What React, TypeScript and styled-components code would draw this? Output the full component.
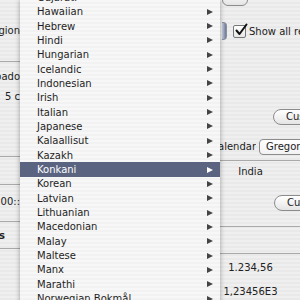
import React from "react";
import styled, { createGlobalStyle } from "styled-components";

const GlobalStyle = createGlobalStyle`
  html, body {
    margin: 0;
    padding: 0;
    overflow: hidden;
    background: #ececec;
  }
  body {
    font-family: "DejaVu Sans", "Liberation Sans", sans-serif;
    font-size: 10px;
    color: #222;
  }
`;

const pinstripe = (a: string, b: string) => `
  repeating-linear-gradient(
    to bottom,
    ${a} 0,
    ${a} 2px,
    ${b} 2px,
    ${b} 4px
  )
`;

const Screen = styled.div`
  width: 300px;
  height: 300px;
  overflow: hidden;
  display: grid;
  grid-template-columns: 20px 200px 80px;
  background: ${pinstripe("#efefef", "#e9e9e9")};
`;

/* ---------- window content left of the menu ---------- */

const LeftPane = styled.div`
  display: flex;
  flex-direction: column;
  overflow: hidden;
`;

// flex-end so that a long label spills off the left edge
const LeftLabel = styled.div<{ $top: number; $bold?: boolean; $inset?: number }>`
  margin-top: ${(p) => p.$top}px;
  height: 14px;
  line-height: 14px;
  display: flex;
  justify-content: flex-end;
  padding-right: ${(p) => p.$inset ?? 0}px;
  white-space: nowrap;
  font-weight: ${(p) => (p.$bold ? 700 : 400)};
  flex-shrink: 0;
`;

const LeftRule = styled.div<{ $top: number }>`
  margin-top: ${(p) => p.$top}px;
  height: 1px;
  background: #a9a9a9;
  flex-shrink: 0;
`;

/* ---------- the menu ---------- */

const Menu = styled.div`
  position: relative;
  z-index: 1;
  background: ${pinstripe("#f7f7f7", "#f2f2f2")};
  box-shadow: 0 0 5px rgba(0, 0, 0, 0.35);
  display: flex;
  flex-direction: column;
`;

const MenuList = styled.div`
  margin-top: -9.8px;
  display: flex;
  flex-direction: column;
`;

const MenuItem = styled.div<{ $active?: boolean }>`
  height: 14.35px;
  flex-shrink: 0;
  display: flex;
  align-items: center;
  justify-content: space-between;
  padding: 0 7px 0 17px;
  white-space: nowrap;
  color: ${(p) => (p.$active ? "#fff" : "#1e1e1e")};
  background: ${(p) => (p.$active ? "#5a6380" : "transparent")};
`;

const Arrow = styled.span<{ $active?: boolean }>`
  width: 0;
  height: 0;
  border-top: 3.5px solid transparent;
  border-bottom: 3.5px solid transparent;
  border-left: 6px solid ${(p) => (p.$active ? "#fff" : "#444")};
`;

/* ---------- window content right of the menu ---------- */

const RightPane = styled.div`
  display: flex;
  flex-direction: column;
  align-items: flex-start;
  overflow: hidden;
`;

const PushButton = styled.div<{ $top: number; $left: number }>`
  margin-top: ${(p) => p.$top}px;
  margin-left: ${(p) => p.$left}px;
  height: 14px;
  padding: 0 12px;
  border: 1px solid #8c8c8c;
  border-radius: 8px;
  background: linear-gradient(to bottom, #ffffff, #f0f0f0 60%, #e4e4e4);
  line-height: 14px;
  white-space: nowrap;
  flex-shrink: 0;
`;

const TopButton = styled(PushButton)`
  width: 0;
  padding: 0 12px;
  border-radius: 0 0 6px 6px;
`;

const CheckRow = styled.div`
  margin-top: 17px;
  height: 16px;
  display: flex;
  align-items: center;
  white-space: nowrap;
`;

const PopupEnd = styled.div`
  margin-left: 2px;
  width: 4px;
  height: 16px;
  border-radius: 0 4px 4px 0;
  border: 1px solid #8a8f9a;
  border-left: none;
  background: linear-gradient(to right, #c9d2e2, #8f9bb4 60%, #6d7a94);
`;

const CheckBox = styled.div`
  margin-left: 6px;
  width: 11px;
  height: 11px;
  border: 1px solid #777;
  border-radius: 2px;
  background: linear-gradient(to bottom, #fff, #e6e6e6);
  position: relative;
  flex-shrink: 0;

  svg {
    position: absolute;
    left: 0;
    top: -3px;
  }
`;

const CheckLabel = styled.span`
  margin-left: 3px;
  font-size: 10px;
`;

const CalendarRow = styled.div`
  margin-top: 13.5px;
  height: 16px;
  display: flex;
  align-items: center;
  white-space: nowrap;
`;

const CalendarLabel = styled.div`
  width: 36px;
  overflow: hidden;
  display: flex;
  justify-content: flex-end;
`;

const Popup = styled.div`
  margin-left: 3px;
  height: 14px;
  padding: 0 20px 0 6px;
  border: 1px solid #8c8c8c;
  border-radius: 4px;
  background: linear-gradient(to bottom, #ffffff, #f2f2f2);
  line-height: 14px;
`;

const Rule = styled.div<{ $top: number }>`
  margin-top: ${(p) => p.$top}px;
  width: 100%;
  height: 1px;
  background: #a9a9a9;
  flex-shrink: 0;
`;

const CenterText = styled.div<{ $top: number }>`
  margin-top: ${(p) => p.$top}px;
  width: 61px;
  height: 14px;
  line-height: 14px;
  text-align: center;
  white-space: nowrap;
`;

const languages = [
  "Gujarati",
  "Hawaiian",
  "Hebrew",
  "Hindi",
  "Hungarian",
  "Icelandic",
  "Indonesian",
  "Irish",
  "Italian",
  "Japanese",
  "Kalaallisut",
  "Kazakh",
  "Konkani",
  "Korean",
  "Latvian",
  "Lithuanian",
  "Macedonian",
  "Malay",
  "Maltese",
  "Manx",
  "Marathi",
  "Norwegian Bokmål",
  "Norwegian Nynorsk",
];

const selected = "Konkani";

const Check = () => (
  <svg width="14" height="14" viewBox="0 0 14 14">
    <path
      d="M2.5 7.5 L5.5 11 L12.5 1.5"
      fill="none"
      stroke="#111"
      strokeWidth="2"
      strokeLinecap="round"
      strokeLinejoin="round"
    />
  </svg>
);

export default function App() {
  return (
    <>
      <GlobalStyle />
      <Screen>
        <LeftPane>
          <LeftLabel $top={24}>
            <span>Region</span>
          </LeftLabel>
          <LeftRule $top={23} />
          <LeftLabel $top={8}>
            <span>Sábado</span>
          </LeftLabel>
          <LeftLabel $top={6}>
            <span>5 c</span>
          </LeftLabel>
          <LeftRule $top={52} />
          <LeftRule $top={27} />
          <LeftLabel $top={10}>
            <span>12:00::</span>
          </LeftLabel>
          <LeftRule $top={12} />
          <LeftLabel $top={7} $bold $inset={15}>
            <span>Numbers</span>
          </LeftLabel>
          <LeftRule $top={5} />
        </LeftPane>

        <Menu>
          <MenuList>
            {languages.map((lang) => (
              <MenuItem key={lang} $active={lang === selected}>
                <span>{lang}</span>
                <Arrow $active={lang === selected} />
              </MenuItem>
            ))}
          </MenuList>
        </Menu>

        <RightPane>
          <TopButton $top={-10} $left={2} />
          <CheckRow>
            <PopupEnd />
            <CheckBox>
              <Check />
            </CheckBox>
            <CheckLabel>Show all regions</CheckLabel>
          </CheckRow>
          <PushButton $top={70} $left={53}>
            Customize…
          </PushButton>
          <CalendarRow>
            <CalendarLabel>
              <span>Calendar</span>
            </CalendarLabel>
            <Popup>Gregorian</Popup>
          </CalendarRow>
          <Rule $top={5} />
          <CenterText $top={4}>India</CenterText>
          <PushButton $top={16} $left={54}>
            Customize…
          </PushButton>
          <Rule $top={15} />
          <Rule $top={26} />
          <CenterText $top={7}>1.234,56</CenterText>
          <CenterText $top={10}>1,23456E3</CenterText>
        </RightPane>
      </Screen>
    </>
  );
}
